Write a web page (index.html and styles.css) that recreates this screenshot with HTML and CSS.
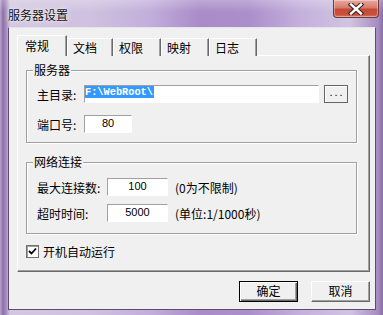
FILE: index.html
```html
<!DOCTYPE html>
<html>
<head>
<meta charset="utf-8">
<link rel="stylesheet" href="styles.css">
</head>
<body>
<div class="win">
  <div class="titlebar">
    <span class="title">服务器设置</span>
    <div class="close">
      <svg width="20" height="12" viewBox="0 0 20 12">
        <path d="M5 1.5 L15 10.5 M15 1.5 L5 10.5" stroke="#3a2424" stroke-width="4.5" stroke-linecap="square"/>
        <path d="M5 1.5 L15 10.5 M15 1.5 L5 10.5" stroke="#ffffff" stroke-width="2.4" stroke-linecap="square"/>
      </svg>
    </div>
  </div>
  <div class="client">
    <div class="tabs">
      <div class="tab sel">常规</div>
      <div class="tab w46">文档</div>
      <div class="tab">权限</div>
      <div class="tab">映射</div>
      <div class="tab">日志</div>
    </div>
    <div class="panel">
      <div class="group g1">
        <div class="legend">服务器</div>
        <div class="row">
          <span class="lbl l1">主目录:</span>
          <div class="input path"><span class="selected">F:\WebRoot\</span></div>
          <div class="browse">...</div>
        </div>
        <div class="row gap12">
          <span class="lbl l1">端口号:</span>
          <div class="input port">80</div>
        </div>
      </div>
      <div class="group g2">
        <div class="legend">网络连接</div>
        <div class="row">
          <span class="lbl l2">最大连接数:</span>
          <div class="input num">100</div>
          <span class="hint">(0为不限制)</span>
        </div>
        <div class="row gap8">
          <span class="lbl l2">超时时间:</span>
          <div class="input num">5000</div>
          <span class="hint">(单位:1/1000秒)</span>
        </div>
      </div>
      <div class="check">
        <span class="box">
          <svg width="9" height="9" viewBox="0 0 9 9"><path d="M1 4 L3.5 6.5 L8 1.5" stroke="#000" stroke-width="1.8" fill="none"/></svg>
        </span>
        <span>开机自动运行</span>
      </div>
    </div>
    <div class="buttons">
      <div class="btn def">确定</div>
      <div class="btn">取消</div>
    </div>
  </div>
</div>
</body>
</html>
```
FILE: styles.css
```css
* { box-sizing: border-box; }
html, body { margin: 0; padding: 0; }
body {
  width: 383px; height: 315px; overflow: hidden;
  font-family: "Noto Sans CJK SC", "Liberation Sans", sans-serif;
  font-size: 12px; color: #000;
}
.win {
  width: 383px; height: 315px;
  display: flex; flex-direction: column;
  background:
    linear-gradient(180deg, rgba(255,255,255,0.25) 0px, rgba(255,255,255,0) 12px),
    linear-gradient(90deg, #b9a6cf 0px, #8c6fa9 3px, #a48cbf 6px, #d3c7e0 10px, #cfc1df 90px, #c2aedb 150px, #a98bc8 200px, #ab8fca 250px, #c4b0dc 300px, #d1c4e1 350px, #a58cc2 378px, #8a6ea8 383px);
}
.titlebar {
  height: 27px; flex: none;
  position: relative;
  padding: 6px 0 0 8px;
}
.title {
  font-size: 12px; line-height: 14px; color: #111;
  text-shadow: 0 0 6px rgba(255,255,255,0.9), 0 0 2px rgba(255,255,255,0.9);
}
.close {
  position: absolute; left: 333px; top: 0; width: 46px; height: 18px;
  border: 1px solid #6b3a3a; border-top: none;
  border-radius: 0 0 4px 4px;
  background: linear-gradient(180deg, #e8a89e 0%, #d77b6c 45%, #c54a36 55%, #c9503c 85%, #d87a62 100%);
  box-shadow: inset 0 0 0 1px rgba(255,255,255,0.35);
  display: flex; align-items: center; justify-content: center;
}
.client {
  margin: 0 7px 0 8px;
  height: 283px; flex: none;
  background: #f0f0f0;
  border: 1px solid #5e4a72;
  border-top-color: #e8e2ee;
  padding: 8px 5px 0 8px;
  display: flex; flex-direction: column;
}
.tabs {
  display: flex; align-items: flex-end;
  height: 20px;
  position: relative; z-index: 1;
  margin-bottom: -1px;
}
.tab {
  width: 48px; height: 18px;
  border-top: 1px solid #fff; border-left: 1px solid #fff;
  border-right: 1px solid #696969;
  box-shadow: inset -1px 0 0 #a0a0a0;
  background: #f0f0f0;
  padding: 0 0 0 5px;
  line-height: 17px; font-size: 12px;
}
.tab.w46 { width: 46px; }
.tab.sel {
  width: 50px; height: 21px;
  padding-top: 2px; padding-left: 7px;
  line-height: 16px;
}
.panel {
  width: 353px; height: 217px;
  border-top: 1px solid #fff; border-left: 1px solid #fff;
  border-right: 1px solid #696969; border-bottom: 1px solid #696969;
  box-shadow: inset -1px -1px 0 #a0a0a0;
  padding: 14px 0 0 8px;
  display: flex; flex-direction: column;
}
.group {
  width: 331px;
  border: 1px solid #a0a0a0;
  box-shadow: inset 1px 1px 0 #fff, 1px 1px 0 #fff;
  padding: 0 0 9px 10px;
}
.g2 { margin-top: 19px; height: 72px; padding-bottom: 10px; }
.g1 { height: 73px; }
.legend {
  width: fit-content;
  height: 14px; line-height: 14px;
  margin: -8px 0 8px -4px;
  padding: 0 1px;
  background: #f0f0f0;
}
.g2 .legend { margin-bottom: 9px; }
.row { display: flex; align-items: center; height: 18px; }
.gap12 { margin-top: 12px; }
.gap8 { margin-top: 8px; }
.lbl { flex: none; line-height: 18px; padding-top: 1px; }
.l1 { width: 47px; }
.l2 { width: 70px; }
.input {
  height: 18px; background: #fff;
  border-top: 1px solid #a0a0a0; border-left: 1px solid #a0a0a0;
  border-right: 1px solid #fff; border-bottom: 1px solid #fff;
  font-family: "Liberation Sans", sans-serif; font-size: 11px;
  line-height: 15px; text-align: center;
}
.path { width: 235px; text-align: left; padding: 0; }
.selected {
  display: inline-block;
  background: #3399ff; color: #fff;
  font-family: "Liberation Mono", monospace; font-size: 10.3px; font-weight: bold;
  line-height: 12px; height: 12px;
  padding: 0 1px 0 0;
  vertical-align: top;
}
.browse {
  width: 24px; height: 18px; margin-left: 5px;
  border: 1px solid #646464;
  box-shadow: inset 1px 1px 0 #fff;
  background: #f0f0f0;
  font-family: "Liberation Sans", sans-serif; font-size: 11px;
  line-height: 13px; text-align: center; letter-spacing: 2px; padding-left: 2px;
}
.port { width: 48px; }
.num { width: 61px; }
.hint { margin-left: 7px; line-height: 18px; padding-top: 1px; }
.check {
  display: flex; align-items: center;
  margin-top: 10px; height: 14px;
}
.box {
  width: 13px; height: 13px; flex: none;
  border: 1px solid #707070;
  box-shadow: inset 1px 1px 0 #a0a0a0;
  background: #fff;
  display: flex; align-items: center; justify-content: center;
  margin-right: 4px;
}
.buttons {
  display: flex; justify-content: flex-end; gap: 13px;
  margin-top: 9px; width: 353px;
}
.btn {
  width: 59px; height: 21px;
  background: #f0f0f0;
  border-top: 1px solid #fff; border-left: 1px solid #fff;
  border-right: 1px solid #696969; border-bottom: 1px solid #696969;
  box-shadow: inset -1px -1px 0 #a0a0a0;
  text-align: center; line-height: 18px; font-size: 12px;
}
.btn.def {
  width: 59px;
  border: 1px solid #000;
  box-shadow: inset 1px 1px 0 #fff, inset -1px -1px 0 #696969, inset -2px -2px 0 #a0a0a0;
}
```
